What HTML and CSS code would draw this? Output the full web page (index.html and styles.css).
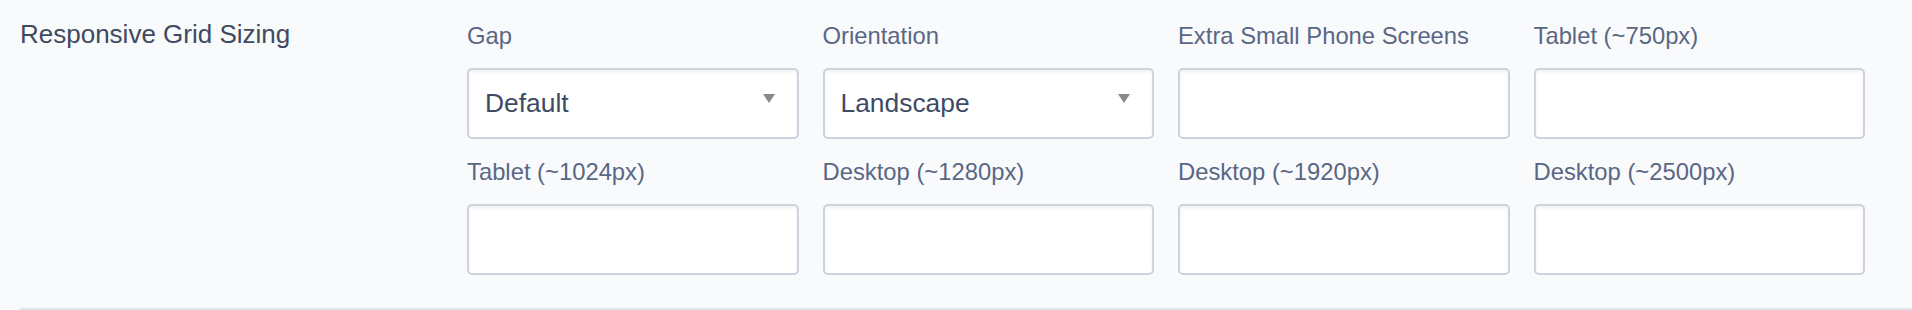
FILE: index.html
```html
<!DOCTYPE html>
<html lang="en">
<head>
<meta charset="utf-8">
<title>Responsive Grid Sizing</title>
<link rel="stylesheet" href="styles.css">
</head>
<body>
<section class="setting">
  <div class="setting-title">Responsive Grid Sizing</div>
  <div class="fields">
    <div class="field">
      <label class="field-label">Gap</label>
      <div class="control select">
        <span class="select-value">Default</span>
        <svg class="caret" width="12" height="9" viewBox="0 0 12 9"><path d="M0 0H12L6 9Z" fill="#8a8a8a"/></svg>
      </div>
    </div>
    <div class="field">
      <label class="field-label">Orientation</label>
      <div class="control select">
        <span class="select-value">Landscape</span>
        <svg class="caret" width="12" height="9" viewBox="0 0 12 9"><path d="M0 0H12L6 9Z" fill="#8a8a8a"/></svg>
      </div>
    </div>
    <div class="field">
      <label class="field-label">Extra Small Phone Screens</label>
      <input class="control" type="text">
    </div>
    <div class="field">
      <label class="field-label">Tablet (~750px)</label>
      <input class="control" type="text">
    </div>
    <div class="field">
      <label class="field-label">Tablet (~1024px)</label>
      <input class="control" type="text">
    </div>
    <div class="field">
      <label class="field-label">Desktop (~1280px)</label>
      <input class="control" type="text">
    </div>
    <div class="field">
      <label class="field-label">Desktop (~1920px)</label>
      <input class="control" type="text">
    </div>
    <div class="field">
      <label class="field-label">Desktop (~2500px)</label>
      <input class="control" type="text">
    </div>
  </div>
</section>
</body>
</html>
```

FILE: styles.css
```css
html, body {
  margin: 0;
  padding: 0;
  background: #f9fafc;
}

body {
  font-family: "Liberation Sans", Arial, Helvetica, sans-serif;
  width: 1912px;
  height: 310px;
  overflow: hidden;
}

.setting {
  display: flex;
  margin-left: 20px;
  padding-top: 21px;
  padding-bottom: 33px;
  border-bottom: 2px solid #dfe3eb;
}

.setting-title {
  width: 447px;
  flex: none;
  font-size: 26px;
  line-height: 27px;
  color: #3f4a60;
}

.fields {
  display: grid;
  grid-template-columns: repeat(4, 331.5px);
  column-gap: 24px;
  row-gap: 18px;
}

.field {
  display: flex;
  flex-direction: column;
}

.field-label {
  display: block;
  font-size: 23.8px;
  line-height: 30px;
  color: #5a6784;
  margin-bottom: 17px;
  white-space: nowrap;
}

.control {
  box-sizing: border-box;
  width: 100%;
  height: 71px;
  margin: 0;
  background: #ffffff;
  border: 2px solid #ccd2de;
  border-radius: 5px;
  box-shadow: inset 0 2px 3px rgba(40, 50, 70, 0.07);
  font-family: inherit;
  font-size: 26.4px;
  color: #3e4a64;
  padding: 0 22px 0 16px;
  outline: none;
}

.select {
  display: flex;
  align-items: center;
  justify-content: space-between;
}

.select-value {
  line-height: 29px;
}

.caret {
  display: block;
  flex: none;
  margin-bottom: 10px;
}
```
